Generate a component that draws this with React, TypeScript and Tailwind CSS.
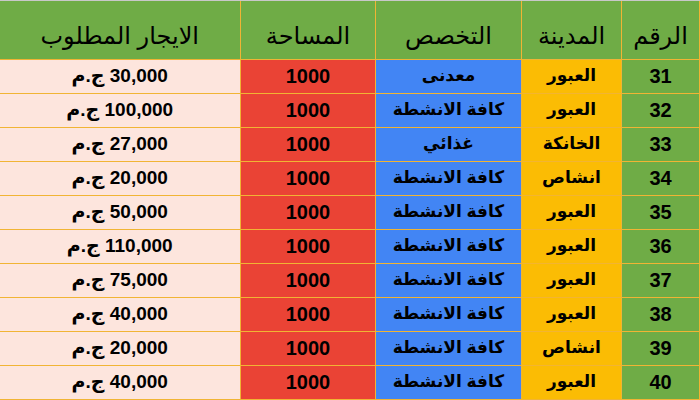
import { ReactElement } from "react";

interface IListing {
  id: number;
  city: string;
  specialty: string;
  area: number;
  rent: string;
}

const listings: IListing[] = [
  { id: 31, city: "العبور", specialty: "معدنى", area: 1000, rent: "30,000" },
  { id: 32, city: "العبور", specialty: "كافة الانشطة", area: 1000, rent: "100,000" },
  { id: 33, city: "الخانكة", specialty: "غذائي", area: 1000, rent: "27,000" },
  { id: 34, city: "انشاص", specialty: "كافة الانشطة", area: 1000, rent: "20,000" },
  { id: 35, city: "العبور", specialty: "كافة الانشطة", area: 1000, rent: "50,000" },
  { id: 36, city: "العبور", specialty: "كافة الانشطة", area: 1000, rent: "110,000" },
  { id: 37, city: "العبور", specialty: "كافة الانشطة", area: 1000, rent: "75,000" },
  { id: 38, city: "العبور", specialty: "كافة الانشطة", area: 1000, rent: "40,000" },
  { id: 39, city: "انشاص", specialty: "كافة الانشطة", area: 1000, rent: "20,000" },
  { id: 40, city: "العبور", specialty: "كافة الانشطة", area: 1000, rent: "40,000" },
];

const cell = "border border-[#f1b434] text-center align-middle p-0";

export default function App(): ReactElement {
  return (
    <div
      dir="rtl"
      className="w-[700px] h-[400px] overflow-hidden bg-white border-t border-[#c8c8c8] font-['Liberation_Sans','DejaVu_Sans',sans-serif] text-black"
    >
      <table className="w-[700px] border-collapse table-fixed">
        <colgroup>
          <col className="w-[78px]" />
          <col className="w-[100px]" />
          <col className="w-[146px]" />
          <col className="w-[135px]" />
          <col className="w-[241px]" />
        </colgroup>
        <thead>
          <tr className="h-[58px] bg-[#6fac46] text-[24px] font-normal">
            <th className={`${cell} border-t-0 font-normal pt-3`}>الرقم</th>
            <th className={`${cell} border-t-0 font-normal pt-3`}>المدينة</th>
            <th className={`${cell} border-t-0 font-normal pt-3`}>التخصص</th>
            <th className={`${cell} border-t-0 font-normal pt-3`}>المساحة</th>
            <th className={`${cell} border-t-0 border-l-0 font-normal pt-3`}>الايجار المطلوب</th>
          </tr>
        </thead>
        <tbody className="text-[17px] font-bold">
          {listings.map((row) => (
            <tr key={row.id} className="h-[34px]">
              <td className={`${cell} bg-[#6fac46] text-[20px]`}>{row.id}</td>
              <td className={`${cell} bg-[#fbbc04]`}>{row.city}</td>
              <td className={`${cell} bg-[#4285f4]`}>{row.specialty}</td>
              <td className={`${cell} bg-[#ea4335] text-[20px]`}>{row.area}</td>
              <td className={`${cell} border-l-0 bg-[#fde5dd] text-[19px]`}>
                {row.rent} ج.م
              </td>
            </tr>
          ))}
        </tbody>
      </table>
    </div>
  );
}
